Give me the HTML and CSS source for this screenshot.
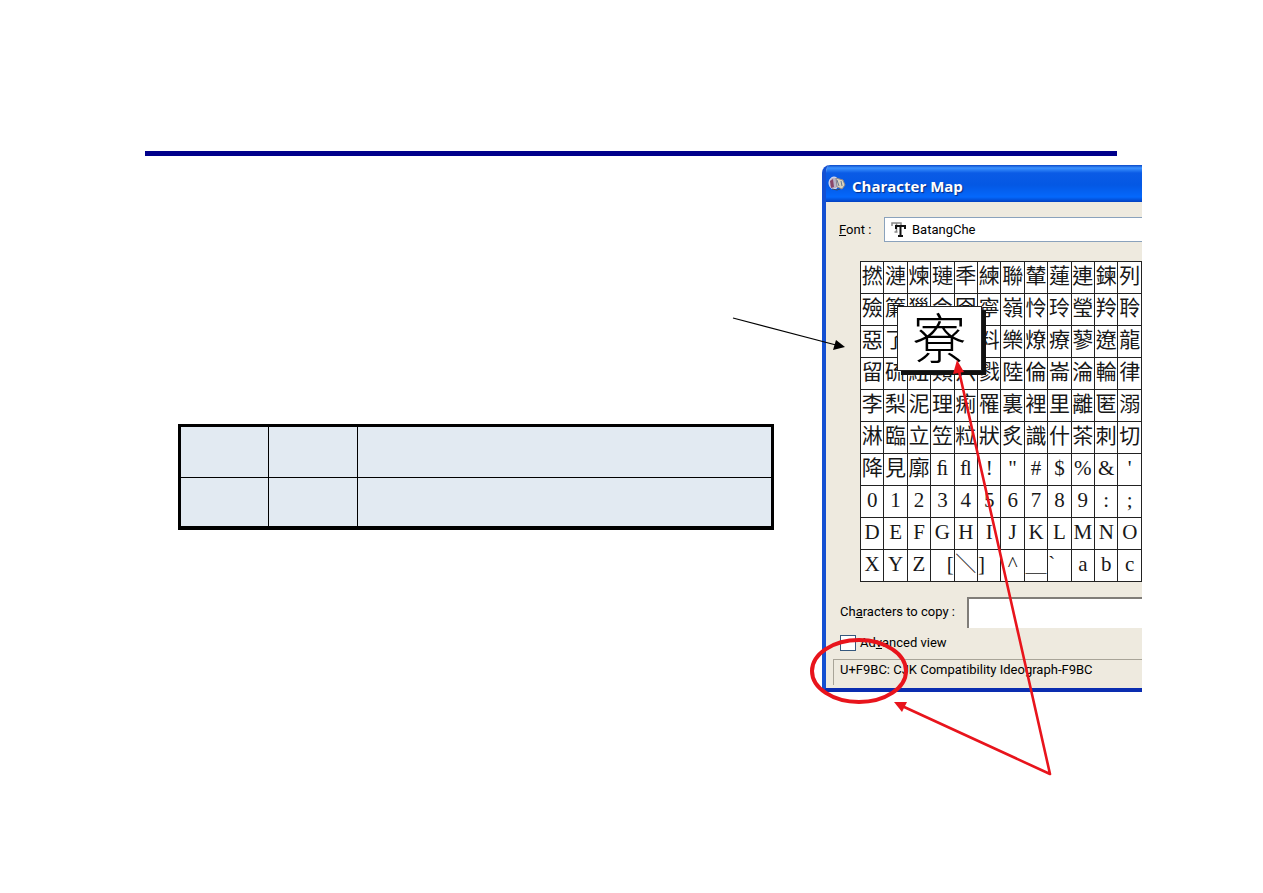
FILE: index.html
```
<!DOCTYPE html>
<html lang="en">
<head>
<meta charset="utf-8">
<meta name="viewport" content="width=device-width, initial-scale=1">
<title>Character Map</title>
<link rel="stylesheet" href="styles.css">
</head>
<body>
<main class="slide">
  <hr class="rule">
  <div class="content">
    <table class="ranges">
      <colgroup><col class="narrow"><col class="narrow"><col></colgroup>
      <tr><td></td><td></td><td></td></tr>
      <tr><td></td><td></td><td></td></tr>
    </table>
    <div class="figure">
      <section class="window">
        <header class="titlebar">
          <svg class="app-icon" viewBox="0 0 18 16" aria-hidden="true">
            <ellipse cx="6" cy="7" rx="5" ry="6" fill="#b8b4c8" stroke="#e8e8f4"/>
            <path d="M2 5l3-2 1 8-3 1z" fill="#8a4668"/>
            <path d="M8 2l7 2 2 5-3 4-5-2z" fill="#d9d3bd" stroke="#8a858c"/>
            <path d="M9 4l2 6M13 5l1 5" stroke="#6b7a96" fill="none"/>
            <path d="M4 13l5 1 3-1" stroke="#34496d" fill="none"/>
          </svg>
          <h1>Character Map</h1>
        </header>
        <div class="body">
          <div class="font-row">
            <label for="font"><u>F</u>ont :</label>
            <div class="font-box">
              <svg class="tt" viewBox="0 0 15 15" aria-hidden="true">
                <path d="M1 4V1h9v3M5.500 1v9M3.500 10h3" fill="none" stroke="#888" stroke-width="1.500"/>
                <path d="M5 7V4h9v3M9.500 4v10M7 14h5" fill="none" stroke="#111" stroke-width="2"/>
              </svg>
              <select id="font"><option>BatangChe</option></select>
            </div>
          </div>
          <div class="map">
            <table class="chars">
              <tr><td>撚</td><td>漣</td><td>煉</td><td>璉</td><td>秊</td><td>練</td><td>聯</td><td>輦</td><td>蓮</td><td>連</td><td>鍊</td><td>列</td></tr>
              <tr><td>殮</td><td>簾</td><td>獵</td><td>令</td><td>囹</td><td>寧</td><td>嶺</td><td>怜</td><td>玲</td><td>瑩</td><td>羚</td><td>聆</td></tr>
              <tr><td>惡</td><td>了</td><td>僚</td><td>寮</td><td>尿</td><td>料</td><td>樂</td><td>燎</td><td>療</td><td>蓼</td><td>遼</td><td>龍</td></tr>
              <tr><td>留</td><td>硫</td><td>紐</td><td>類</td><td>六</td><td>戮</td><td>陸</td><td>倫</td><td>崙</td><td>淪</td><td>輪</td><td>律</td></tr>
              <tr><td>李</td><td>梨</td><td>泥</td><td>理</td><td>痢</td><td>罹</td><td>裏</td><td>裡</td><td>里</td><td>離</td><td>匿</td><td>溺</td></tr>
              <tr><td>淋</td><td>臨</td><td>立</td><td>笠</td><td>粒</td><td>狀</td><td>炙</td><td>識</td><td>什</td><td>茶</td><td>刺</td><td>切</td></tr>
              <tr><td>降</td><td>見</td><td>廓</td><td>ﬁ</td><td>ﬂ</td><td>!</td><td>"</td><td>#</td><td>$</td><td>%</td><td>&amp;</td><td>'</td></tr>
              <tr><td>0</td><td>1</td><td>2</td><td>3</td><td>4</td><td>5</td><td>6</td><td>7</td><td>8</td><td>9</td><td>:</td><td>;</td></tr>
              <tr><td>D</td><td>E</td><td>F</td><td>G</td><td>H</td><td>I</td><td>J</td><td>K</td><td>L</td><td>M</td><td>N</td><td>O</td></tr>
              <tr><td>X</td><td>Y</td><td>Z</td><td class="end">[</td><td>＼</td><td class="start">]</td><td>^</td><td>＿</td><td class="start">`</td><td>a</td><td>b</td><td>c</td></tr>
            </table>
            <div class="magnified">寮</div>
          </div>
          <div class="copy-row">
            <label for="copy">Ch<u>a</u>racters to copy :</label>
            <input id="copy" type="text">
          </div>
          <div class="advanced-row">
            <input id="advanced" type="checkbox">
            <label for="advanced">Ad<u>v</u>anced view</label>
          </div>
          <div class="status">U+F9BC: CJK Compatibility Ideograph-F9BC</div>
        </div>
      </section>
      <svg class="callouts" viewBox="0 0 320 527" aria-hidden="true">
        <path d="M-89 153L14 180" stroke="#000" stroke-width="1.200"/>
        <path d="M23 182L11 185L14 175z" fill="#000"/>
        <ellipse cx="37" cy="506" rx="47" ry="31" fill="none" stroke="#e8141c" stroke-width="4"/>
        <path d="M137 206L228 609L80 541" fill="none" stroke="#e8141c" stroke-width="2.600" stroke-linejoin="round"/>
        <path d="M135 195L142 207L131 209z" fill="#e8141c"/>
        <path d="M72 537L85 537L80 547z" fill="#e8141c"/>
      </svg>
    </div>
  </div>
</main>
</body>
</html>
```
FILE: styles.css
```
* { box-sizing: border-box; }

body {
  margin: 0;
  background: #fff;
  color: #000;
  font-family: "Liberation Sans", sans-serif;
}

.slide { padding: 151px 121px 120px 145px; }

.rule {
  height: 5px;
  margin: 0 25px 0 0;
  border: 0;
  background: #00008b;
}

.content {
  display: grid;
  grid-template-columns: minmax(0, 1fr) 320px;
  align-items: start;
  margin-top: 9px;
}

.ranges {
  margin: 259px 48px 0 33px;
  width: calc(100% - 81px);
  table-layout: fixed;
  border-collapse: separate;
  border-spacing: 0;
  border: 3px solid #000;
  border-bottom-width: 4px;
  background: #e2eaf2;
}
.ranges .narrow { width: 89px; }
.ranges .narrow:first-child { width: 88px; }
.ranges td {
  height: 48px;
  padding: 0;
  border-right: 1px solid #000;
}
.ranges td:last-child { border-right: 0; }
.ranges tr:first-child td { height: 51px; border-bottom: 1px solid #000; }

.figure { position: relative; }

.window {
  border: solid #1450d2;
  border-width: 0 0 4px 4px;
  border-bottom-color: #0a2db0;
  border-top-left-radius: 8px;
  background: #eeeadf;
  overflow: hidden;
  font-family: "Liberation Sans Narrow", Roboto, sans-serif;
  font-size: 13px;
  line-height: 16px;
}

.titlebar {
  display: flex;
  align-items: center;
  gap: 6px;
  height: 37px;
  padding: 5px 0 0 2px;
  background: linear-gradient(#0a48c8, #3c93ff 3px, #0a5be6 8px, #0458e4 20px, #0468fc 32px, #0340c0);
}
.app-icon { width: 18px; height: 16px; margin-bottom: 4px; }
.titlebar h1 {
  margin: 0;
  color: #fff;
  font: bold 15px/20px "Open Sans", sans-serif;
  text-shadow: 1px 1px 1px #0a2a80;
}

.body { padding: 15px 0 3px 7px; }

.font-row { display: flex; align-items: center; padding-left: 6px; }
.font-row label { width: 45px; }
.font-box {
  flex: 1;
  display: flex;
  align-items: center;
  gap: 6px;
  height: 25px;
  padding-left: 6px;
  border: 1px solid #8aa2bc;
  border-right: 0;
  background: #fff;
}
.tt { width: 15px; height: 15px; }
.font-box select {
  flex: 1;
  appearance: none;
  padding: 0;
  border: 0;
  background: none;
  color: #000;
  font: inherit;
}

.map { position: relative; margin: 19px 0 0 27px; }
.chars {
  width: 100%;
  table-layout: fixed;
  border-collapse: collapse;
  background: #fff;
  color: #181818;
  font: 21px/24px "Liberation Serif", "Noto Sans CJK TC", serif;
}
.chars td {
  height: 32px;
  padding: 0 0 4px;
  border: 1px solid #222;
  text-align: center;
  overflow: hidden;
}
.chars .end { text-align: right; }
.chars .start { text-align: left; }

.magnified {
  position: absolute;
  left: 37px;
  top: 45px;
  width: 85px;
  height: 65px;
  border: 1px solid #222;
  background: #fff;
  box-shadow: 4px 4px 0 #111;
  font: 300 54px/58px "Noto Sans CJK TC", sans-serif;
  text-align: center;
}

.copy-row { display: flex; align-items: center; margin-top: 15px; padding-left: 7px; }
.copy-row label { width: 127px; padding-bottom: 2px; }
.copy-row input {
  flex: 1;
  min-width: 0;
  height: 31px;
  border: solid #807d78;
  border-width: 2px 0 0 2px;
  background: #fff;
}

.advanced-row {
  display: flex;
  align-items: center;
  gap: 4px;
  margin-top: 7px;
  padding-left: 7px;
}
.advanced-row input {
  appearance: none;
  width: 16px;
  height: 16px;
  margin: 0;
  border: 1px solid #35587e;
  background: #fff;
}

.status {
  height: 26px;
  margin-top: 8px;
  padding: 2px 0 0 6px;
  border: solid #a8a498;
  border-width: 1px 0 0 1px;
  white-space: nowrap;
}

.callouts {
  position: absolute;
  left: 0;
  top: 0;
  width: 320px;
  height: 527px;
  overflow: visible;
  pointer-events: none;
}
```
